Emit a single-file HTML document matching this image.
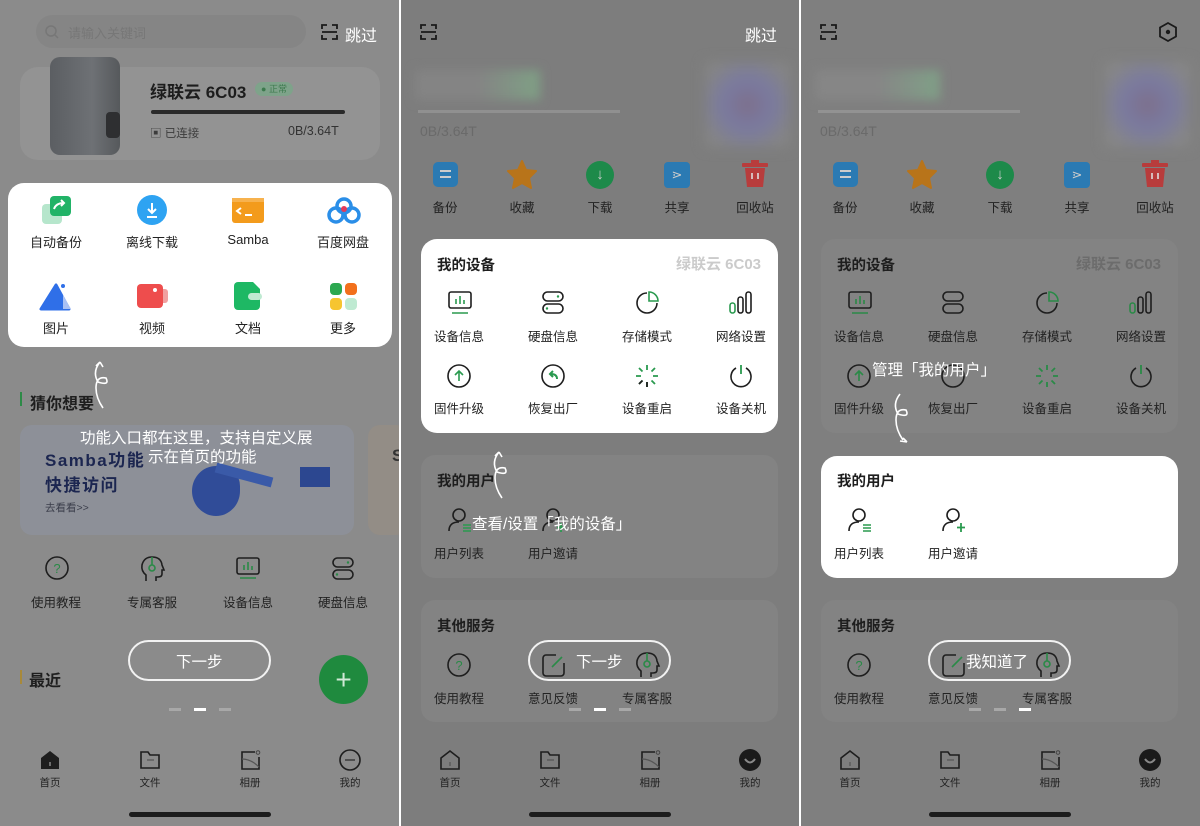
<!DOCTYPE html>
<html><head><meta charset="utf-8"><style>
*{margin:0;padding:0;box-sizing:border-box}
body{width:1200px;height:826px;overflow:hidden;background:#fff;font-family:"Liberation Sans","Noto Sans CJK SC",sans-serif;position:relative}
.p{position:absolute;top:0;height:826px;overflow:hidden}
.a{position:absolute}
.t{position:absolute;white-space:nowrap;transform:translateX(-50%);font-size:12.5px;color:#222}
.wc{position:absolute;background:#fff;border-radius:16px}
.dc{position:absolute;background:#838383;border-radius:14px}
.h{position:absolute;font-size:14.5px;font-weight:bold;color:#1e1e1e}
.w{position:absolute;color:#fff;font-size:15.5px;white-space:nowrap}
.btn{position:absolute;border:2px solid #f2f2f2;border-radius:21px;height:41px;width:143px}
.dot{position:absolute;width:12px;height:3px;background:#a8a8a8}
.hb{position:absolute;width:142px;height:5px;border-radius:3px;background:#1c1c1c}
svg{position:absolute;overflow:visible}
.tab{position:absolute;font-size:10.5px;color:#222;transform:translateX(-50%)}
</style></head><body>

<!-- PANEL 1 -->
<div class="p" style="left:0;width:399px;background:#8b8b8b">
 <div class="a" style="left:36px;top:15px;width:270px;height:33px;border-radius:17px;background:#858585"></div>
 <svg style="left:45px;top:25px" width="14" height="14"><circle cx="6" cy="6" r="5" fill="none" stroke="#777" stroke-width="1.5"/><line x1="10" y1="10" x2="13" y2="13" stroke="#777" stroke-width="1.5"/></svg>
 <div class="a" style="left:68px;top:23px;font-size:13px;color:#777">请输入关键词</div>
 <svg style="left:321px;top:24px" width="17" height="16"><path d="M1 5V1h5M11 1h5v4M1 11v4h5M11 15h5v-4M1 8h15" fill="none" stroke="#1a1a1a" stroke-width="1.8"/></svg>
 <div class="a" style="left:345px;top:22px;font-size:16px;color:#fff">跳过</div>
 <div class="a" style="left:20px;top:67px;width:360px;height:93px;border-radius:18px;background:#939393"></div>
 <div class="a" style="left:50px;top:57px;width:70px;height:98px;border-radius:10px;background:linear-gradient(90deg,#5b5e62,#6e7175 60%,#56595c)"></div>
 <div class="a" style="left:106px;top:112px;width:14px;height:26px;border-radius:4px;background:#2e2f31"></div>
 <div class="a" style="left:150px;top:78px;font-size:17px;font-weight:bold;color:#1d1d1d">绿联云 6C03</div>
 <div class="a" style="left:255px;top:82px;width:38px;height:14px;border-radius:7px;background:#7ea38a;font-size:9px;color:#3d7a4e;text-align:center;line-height:14px">● 正常</div>
 <div class="a" style="left:151px;top:110px;width:194px;height:4px;border-radius:2px;background:#2a2a2a"></div>
 <div class="a" style="left:150px;top:125px;font-size:11.5px;color:#3c3c3c">▣ 已连接</div>
 <div class="a" style="left:288px;top:124px;font-size:12.5px;color:#333">0B/3.64T</div>

 <div class="wc" style="left:8px;top:183px;width:384px;height:164px"></div>
 <svg style="left:41px;top:196px" width="32" height="30"><rect x="1" y="8" width="20" height="20" rx="4" fill="#b6e6cc"/><rect x="9" y="0" width="21" height="20" rx="4" fill="#21b367"/><path d="M13 13q2-6 10-6m-3-3l3 3-3 3" fill="none" stroke="#fff" stroke-width="2"/></svg>
 <svg style="left:137px;top:195px" width="30" height="30"><circle cx="15" cy="15" r="15" fill="#2ea3f2"/><path d="M15 8v10m-4-4l4 4 4-4M10 22h10" fill="none" stroke="#fff" stroke-width="2"/></svg>
 <svg style="left:232px;top:198px" width="32" height="25"><rect width="32" height="25" rx="3" fill="#f39b1c"/><rect width="32" height="4" fill="#f7b24e"/><path d="M9 10l-4 3 4 3M13 17h7" fill="none" stroke="#fff" stroke-width="2"/></svg>
 <svg style="left:327px;top:197px" width="34" height="28"><circle cx="9" cy="18" r="7" fill="none" stroke="#2a8ee8" stroke-width="3.5"/><circle cx="25" cy="18" r="7" fill="none" stroke="#2a8ee8" stroke-width="3.5"/><circle cx="17" cy="9" r="7" fill="none" stroke="#2a8ee8" stroke-width="3.5"/><circle cx="17" cy="12" r="3" fill="#e23a5a"/></svg>
 <svg style="left:39px;top:283px" width="34" height="28"><path d="M17 2L2 26h28z" fill="#2f6fe8" stroke="#2f6fe8" stroke-width="3" stroke-linejoin="round"/><circle cx="24" cy="3" r="2" fill="#2f6fe8"/><path d="M24 12l8 14h-8" fill="#a9c1f4"/></svg>
 <svg style="left:137px;top:284px" width="32" height="24"><rect x="22" y="5" width="9" height="14" rx="3" fill="#f1a0a0"/><rect x="0" y="0" width="26" height="24" rx="4" fill="#ee4d4d"/><circle cx="18" cy="6" r="2" fill="#fff"/></svg>
 <svg style="left:234px;top:282px" width="28" height="28"><path d="M4 0h15l7 7v17a4 4 0 01-4 4H4a4 4 0 01-4-4V4a4 4 0 014-4z" fill="#1eb864"/><rect x="14" y="11" width="14" height="7" rx="3.5" fill="#bfead2"/></svg>
 <svg style="left:330px;top:283px" width="27" height="27"><rect x="0" y="0" width="12" height="12" rx="4" fill="#2ca850"/><rect x="15" y="0" width="12" height="12" rx="4" fill="#f2701c"/><rect x="0" y="15" width="12" height="12" rx="4" fill="#f6c530"/><rect x="15" y="15" width="12" height="12" rx="4" fill="#bfead2"/></svg>
 <div class="t" style="left:56px;top:232px;font-size:13px">自动备份</div>
 <div class="t" style="left:152px;top:232px;font-size:13px">离线下载</div>
 <div class="t" style="left:248px;top:232px;font-size:13px">Samba</div>
 <div class="t" style="left:343px;top:232px;font-size:13px">百度网盘</div>
 <div class="t" style="left:56px;top:318px;font-size:13px">图片</div>
 <div class="t" style="left:152px;top:318px;font-size:13px">视频</div>
 <div class="t" style="left:248px;top:318px;font-size:13px">文档</div>
 <div class="t" style="left:343px;top:318px;font-size:13px">更多</div>

 <svg style="left:88px;top:360px" width="26" height="52"><path d="M12 2q-8 10-2 20q12 4 8-4q-10-2-10 10q0 10 7 20M12 2l-4 4M12 2l3 5" fill="none" stroke="#fff" stroke-width="1.6"/></svg>
 <div class="a" style="left:20px;top:392px;width:2px;height:14px;background:#2d8a47"></div>
 <div class="a" style="left:30px;top:390px;font-size:16px;font-weight:bold;color:#1e1e1e">猜你想要</div>
 <div class="a" style="left:20px;top:425px;width:334px;height:110px;border-radius:12px;background:#8d9098"></div>
 <div class="a" style="left:368px;top:425px;width:40px;height:110px;border-radius:12px;background:#938d86"></div>
 <div class="a" style="left:45px;top:446px;font-size:17px;font-weight:bold;color:#1c2650;letter-spacing:1.5px">Samba功能</div>
 <div class="a" style="left:45px;top:471px;font-size:17px;font-weight:bold;color:#1c2650;letter-spacing:1.5px">快捷访问</div>
 <div class="a" style="left:45px;top:500px;font-size:10.5px;color:#3a3d4a">去看看>></div>
 <div class="a" style="left:392px;top:446px;font-size:17px;font-weight:bold;color:#333">S</div>
 <div class="a" style="left:192px;top:466px;width:48px;height:50px;border-radius:50% 40% 50% 50%;background:#304c98"></div>
 <div class="a" style="left:215px;top:470px;width:58px;height:10px;background:#3a5aa8;transform:rotate(15deg)"></div>
 <div class="a" style="left:300px;top:467px;width:30px;height:20px;background:#2c4790"></div>
 <div class="w" style="left:80px;top:426px">功能入口都在这里，支持自定义展</div>
 <div class="w" style="left:148px;top:445px">示在首页的功能</div>

 <svg style="left:45px;top:556px" width="24" height="24"><circle cx="12" cy="12" r="11" fill="none" stroke="#1e1e1e" stroke-width="1.6"/><text x="12" y="17" text-anchor="middle" font-size="13" fill="#2a8a47" font-family="Liberation Sans">?</text></svg>
 <svg style="left:140px;top:556px" width="24" height="26"><path d="M6 25v-6q-5-4-4-10q2-8 10-8q9 0 10 8l2 5h-2v4q0 3-4 3h-2v4" fill="none" stroke="#1e1e1e" stroke-width="1.6"/><circle cx="12" cy="12" r="3" fill="none" stroke="#2a8a47" stroke-width="1.6"/><path d="M12 1v8" stroke="#2a8a47" stroke-width="1.6"/></svg>
 <svg style="left:236px;top:557px" width="24" height="22"><rect x="1" y="1" width="22" height="16" rx="2" fill="none" stroke="#1e1e1e" stroke-width="1.6"/><path d="M4 21h16M8 13V8M12 13V5M16 13V9" stroke="#2a8a47" stroke-width="1.6"/></svg>
 <svg style="left:332px;top:557px" width="22" height="24"><rect x="1" y="1" width="20" height="9" rx="4.5" fill="none" stroke="#1e1e1e" stroke-width="1.6"/><rect x="1" y="13" width="20" height="9" rx="4.5" fill="none" stroke="#1e1e1e" stroke-width="1.6"/><circle cx="16" cy="5.5" r="1.2" fill="#2a8a47"/><circle cx="5" cy="17.5" r="1.2" fill="#2a8a47"/></svg>
 <div class="t" style="left:56px;top:592px">使用教程</div>
 <div class="t" style="left:152px;top:592px">专属客服</div>
 <div class="t" style="left:248px;top:592px">设备信息</div>
 <div class="t" style="left:343px;top:592px">硬盘信息</div>

 <div class="a" style="left:20px;top:670px;width:2px;height:14px;background:#a8893a"></div>
 <div class="a" style="left:29px;top:667px;font-size:16px;font-weight:bold;color:#1e1e1e">最近</div>
 <div class="btn" style="left:128px;top:640px"></div>
 <div class="w" style="left:176px;top:650px">下一步</div>
 <div class="a" style="left:319px;top:655px;width:49px;height:49px;border-radius:50%;background:#1f8a3e"></div>
 <div class="a" style="left:319px;top:655px;width:49px;line-height:49px;text-align:center;color:#d0e9d6;font-size:28px">+</div>
 <div class="dot" style="left:169px;top:708px"></div><div class="dot" style="left:194px;top:708px;background:#fff"></div><div class="dot" style="left:219px;top:708px"></div>
</div>

<!-- PANEL 2 -->
<div class="p" style="left:401px;width:398px;background:#7d7d7d"></div>
<!-- PANEL 3 -->
<div class="p" style="left:801px;width:399px;background:#7f7f7f"></div>

<!-- shared top for panels 2 & 3 -->
<div class="p" style="left:400px;width:800px">
 <svg style="left:20px;top:24px" width="17" height="16"><path d="M1 5V1h5M11 1h5v4M1 11v4h5M11 15h5v-4M1 8h15" fill="none" stroke="#1a1a1a" stroke-width="1.8"/></svg>
 <div class="a" style="left:345px;top:22px;font-size:16px;color:#fff">跳过</div>
 <svg style="left:420px;top:24px" width="17" height="16"><path d="M1 5V1h5M11 1h5v4M1 11v4h5M11 15h5v-4M1 8h15" fill="none" stroke="#1a1a1a" stroke-width="1.8"/></svg>
 <svg style="left:759px;top:22px" width="18" height="20"><path d="M9 1l8 4.5v9L9 19l-8-4.5v-9z" fill="none" stroke="#1a1a1a" stroke-width="1.8"/><circle cx="9" cy="10" r="2.2" fill="#1a1a1a"/></svg>
</div>

<div class="p" style="left:400px;width:400px">
 <div class="a" style="left:15px;top:70px;width:125px;height:30px;background:linear-gradient(90deg,#848484 50%,#7fa085);filter:blur(5px)"></div>
 <div class="a" style="left:18px;top:110px;width:202px;height:3px;background:#909090"></div>
 <div class="a" style="left:20px;top:123px;font-size:14px;color:#6a6a6a">0B/3.64T</div>
 <div class="a" style="left:305px;top:62px;width:85px;height:85px;background:radial-gradient(#7d6f8a,#7a7aa0 40%,#858585 80%);filter:blur(6px)"></div>
</div>
<div class="p" style="left:800px;width:400px">
 <div class="a" style="left:15px;top:70px;width:125px;height:30px;background:linear-gradient(90deg,#868686 50%,#80a087);filter:blur(5px)"></div>
 <div class="a" style="left:18px;top:110px;width:202px;height:3px;background:#929292"></div>
 <div class="a" style="left:20px;top:123px;font-size:14px;color:#6a6a6a">0B/3.64T</div>
 <div class="a" style="left:305px;top:62px;width:85px;height:85px;background:radial-gradient(#7d6f8a,#7a7aa0 40%,#878787 80%);filter:blur(6px)"></div>
</div>

<!-- icon rows (panels 2/3) generated twice -->
<div class="p" style="left:400px;width:400px" id="r2">
 <div class="a" style="left:33px;top:162px;width:25px;height:25px;border-radius:5px;background:#2b7ab3"></div><div class="a" style="left:40px;top:170px;width:11px;height:2px;background:#ccc;box-shadow:0 6px 0 #ccc"></div>
 <div class="a" style="left:507px;top:160px" ></div>
 <svg style="left:107px;top:160px" width="30" height="28"><path d="M15 1l4 9 10 1-7 7 2 10-9-5-9 5 2-10-7-7 10-1z" fill="#b8741a" stroke="#b8741a" stroke-linejoin="round" stroke-width="2"/></svg>
 <div class="a" style="left:186px;top:161px;width:28px;height:28px;border-radius:50%;background:#1d8a4a"></div><div class="a" style="left:186px;top:161px;width:28px;text-align:center;line-height:28px;color:#ccc;font-size:15px">↓</div>
 <div class="a" style="left:264px;top:162px;width:26px;height:26px;border-radius:4px;background:#2b7ab3;color:#ccc;font-size:13px;text-align:center;line-height:26px">⋗</div>
 <svg style="left:342px;top:160px" width="26" height="28"><rect x="0" y="3" width="26" height="4" rx="1" fill="#b83c3c"/><rect x="9" y="0" width="8" height="4" fill="#b83c3c"/><path d="M3 8h20l-2 19H5z" fill="#b83c3c"/><path d="M10 13v6M16 13v6" stroke="#ddd" stroke-width="1.6"/></svg>
 <div class="t" style="left:45px;top:197px">备份</div><div class="t" style="left:122px;top:197px">收藏</div><div class="t" style="left:200px;top:197px">下载</div><div class="t" style="left:277px;top:197px">共享</div><div class="t" style="left:355px;top:197px">回收站</div>
</div>
<div class="p" style="left:800px;width:400px">
 <div class="a" style="left:33px;top:162px;width:25px;height:25px;border-radius:5px;background:#2b7ab3"></div><div class="a" style="left:40px;top:170px;width:11px;height:2px;background:#ccc;box-shadow:0 6px 0 #ccc"></div>
 <svg style="left:107px;top:160px" width="30" height="28"><path d="M15 1l4 9 10 1-7 7 2 10-9-5-9 5 2-10-7-7 10-1z" fill="#b8741a" stroke="#b8741a" stroke-linejoin="round" stroke-width="2"/></svg>
 <div class="a" style="left:186px;top:161px;width:28px;height:28px;border-radius:50%;background:#1d8a4a"></div><div class="a" style="left:186px;top:161px;width:28px;text-align:center;line-height:28px;color:#ccc;font-size:15px">↓</div>
 <div class="a" style="left:264px;top:162px;width:26px;height:26px;border-radius:4px;background:#2b7ab3;color:#ccc;font-size:13px;text-align:center;line-height:26px">⋗</div>
 <svg style="left:342px;top:160px" width="26" height="28"><rect x="0" y="3" width="26" height="4" rx="1" fill="#b83c3c"/><rect x="9" y="0" width="8" height="4" fill="#b83c3c"/><path d="M3 8h20l-2 19H5z" fill="#b83c3c"/><path d="M10 13v6M16 13v6" stroke="#ddd" stroke-width="1.6"/></svg>
 <div class="t" style="left:45px;top:197px">备份</div><div class="t" style="left:122px;top:197px">收藏</div><div class="t" style="left:200px;top:197px">下载</div><div class="t" style="left:277px;top:197px">共享</div><div class="t" style="left:355px;top:197px">回收站</div>
</div>

<!-- Panel 2 cards -->
<div class="p" style="left:400px;width:400px">
 <div class="wc" style="left:21px;top:239px;width:357px;height:194px"></div>
 <div class="dc" style="left:21px;top:455px;width:357px;height:123px"></div>
 <div class="dc" style="left:21px;top:600px;width:357px;height:122px"></div>
 <div class="h" style="left:37px;top:254px">我的设备</div>
 <div class="a" style="left:276px;top:253px;font-size:15px;font-weight:bold;color:#cbcbcb">绿联云 6C03</div>
 <div class="h" style="left:37px;top:470px">我的用户</div>
 <div class="h" style="left:37px;top:615px">其他服务</div>
</div>
<!-- Panel 3 cards -->
<div class="p" style="left:800px;width:400px">
 <div class="dc" style="left:21px;top:239px;width:357px;height:194px"></div>
 <div class="wc" style="left:21px;top:456px;width:357px;height:122px"></div>
 <div class="dc" style="left:21px;top:600px;width:357px;height:122px"></div>
 <div class="h" style="left:37px;top:254px">我的设备</div>
 <div class="a" style="left:276px;top:253px;font-size:15px;font-weight:bold;color:#6c6c6c">绿联云 6C03</div>
 <div class="h" style="left:37px;top:470px">我的用户</div>
 <div class="h" style="left:37px;top:615px">其他服务</div>
</div>

<!-- device icons, users, services for both panels -->
<div class="p" style="left:400px;width:400px">
 <svg style="left:48px;top:291px" width="24" height="24"><rect x="1" y="1" width="22" height="16" rx="2" fill="none" stroke="#1e1e1e" stroke-width="1.6"/><path d="M4 22h16M8 13V8M12 13V5M16 13V9" stroke="#2a9a4f" stroke-width="1.6"/></svg>
 <svg style="left:142px;top:291px" width="22" height="24"><rect x="1" y="1" width="20" height="9" rx="4.5" fill="none" stroke="#1e1e1e" stroke-width="1.6"/><rect x="1" y="13" width="20" height="9" rx="4.5" fill="none" stroke="#1e1e1e" stroke-width="1.6"/><circle cx="16" cy="5.5" r="1.2" fill="#2a9a4f"/><circle cx="5" cy="17.5" r="1.2" fill="#2a9a4f"/></svg>
 <svg style="left:235px;top:291px" width="24" height="24"><path d="M12 2a10 10 0 1 0 10 10" fill="none" stroke="#1e1e1e" stroke-width="1.6"/><path d="M14 1v9h9a9 9 0 0 0-9-9z" fill="none" stroke="#2a9a4f" stroke-width="1.6"/></svg>
 <svg style="left:329px;top:291px" width="24" height="24"><rect x="1" y="12" width="5" height="10" rx="2.5" fill="none" stroke="#2a9a4f" stroke-width="1.6"/><rect x="9" y="6" width="5" height="16" rx="2.5" fill="none" stroke="#1e1e1e" stroke-width="1.6"/><rect x="17" y="1" width="5" height="21" rx="2.5" fill="none" stroke="#1e1e1e" stroke-width="1.6"/></svg>
 <svg style="left:47px;top:364px" width="24" height="24"><circle cx="12" cy="12" r="11" fill="none" stroke="#1e1e1e" stroke-width="1.6"/><path d="M12 17V7M8 11l4-4 4 4" fill="none" stroke="#2a9a4f" stroke-width="1.6"/></svg>
 <svg style="left:141px;top:364px" width="24" height="24"><circle cx="12" cy="12" r="11" fill="none" stroke="#1e1e1e" stroke-width="1.6"/><path d="M16 15q0-5-6-5M12 7l-3 3 3 3" fill="none" stroke="#2a9a4f" stroke-width="2"/></svg>
 <svg style="left:235px;top:364px" width="24" height="24"><path d="M12 1v5M12 18v5M1 12h5M18 12h5M4 4l3.5 3.5M16.5 16.5L20 20M20 4l-3.5 3.5M4 20l3.5-3.5" stroke="#2a9a4f" stroke-width="1.8"/><path d="M12 18v5M4 20l3.5-3.5" stroke="#1e1e1e" stroke-width="1.8"/></svg>
 <svg style="left:329px;top:364px" width="24" height="24"><path d="M7 4a10 10 0 1 0 10 0" fill="none" stroke="#1e1e1e" stroke-width="1.6"/><path d="M12 1v9" stroke="#2a9a4f" stroke-width="1.8"/></svg>
 <div class="t" style="left:59px;top:326px">设备信息</div><div class="t" style="left:153px;top:326px">硬盘信息</div><div class="t" style="left:247px;top:326px">存储模式</div><div class="t" style="left:341px;top:326px">网络设置</div>
 <div class="t" style="left:59px;top:398px">固件升级</div><div class="t" style="left:153px;top:398px">恢复出厂</div><div class="t" style="left:247px;top:398px">设备重启</div><div class="t" style="left:341px;top:398px">设备关机</div>
 <svg style="left:48px;top:508px" width="24" height="24"><circle cx="11" cy="7" r="6" fill="none" stroke="#1e1e1e" stroke-width="1.6"/><path d="M1 23q0-9 10-9" fill="none" stroke="#1e1e1e" stroke-width="1.6"/><path d="M15 17h8M15 20h8M15 23h8" stroke="#2a9a4f" stroke-width="1.6"/></svg>
 <svg style="left:142px;top:508px" width="24" height="24"><circle cx="11" cy="7" r="6" fill="none" stroke="#1e1e1e" stroke-width="1.6"/><path d="M1 23q0-9 10-9" fill="none" stroke="#1e1e1e" stroke-width="1.6"/><path d="M19 15v9M15 19.5h8" stroke="#2a9a4f" stroke-width="1.8"/></svg>
 <div class="t" style="left:59px;top:543px">用户列表</div><div class="t" style="left:153px;top:543px">用户邀请</div>
 <svg style="left:47px;top:653px" width="24" height="24"><circle cx="12" cy="12" r="11" fill="none" stroke="#1e1e1e" stroke-width="1.6"/><text x="12" y="17" text-anchor="middle" font-size="13" fill="#2a8a47" font-family="Liberation Sans">?</text></svg>
 <svg style="left:142px;top:653px" width="24" height="24"><path d="M14 2H4a3 3 0 0 0-3 3v15a3 3 0 0 0 3 3h15a3 3 0 0 0 3-3V10" fill="none" stroke="#1e1e1e" stroke-width="1.6"/><path d="M10 14L20 4" stroke="#2a8a47" stroke-width="1.6"/></svg>
 <svg style="left:235px;top:652px" width="24" height="26"><path d="M6 25v-6q-5-4-4-10q2-8 10-8q9 0 10 8l2 5h-2v4q0 3-4 3h-2v4" fill="none" stroke="#1e1e1e" stroke-width="1.6"/><circle cx="12" cy="12" r="3" fill="none" stroke="#2a8a47" stroke-width="1.6"/><path d="M12 1v8" stroke="#2a8a47" stroke-width="1.6"/></svg>
 <div class="t" style="left:59px;top:688px">使用教程</div><div class="t" style="left:153px;top:688px">意见反馈</div><div class="t" style="left:247px;top:688px">专属客服</div>
</div>
<div class="p" style="left:800px;width:400px">
 <svg style="left:48px;top:291px" width="24" height="24"><rect x="1" y="1" width="22" height="16" rx="2" fill="none" stroke="#1e1e1e" stroke-width="1.6"/><path d="M4 22h16M8 13V8M12 13V5M16 13V9" stroke="#2a8a47" stroke-width="1.6"/></svg>
 <svg style="left:142px;top:291px" width="22" height="24"><rect x="1" y="1" width="20" height="9" rx="4.5" fill="none" stroke="#1e1e1e" stroke-width="1.6"/><rect x="1" y="13" width="20" height="9" rx="4.5" fill="none" stroke="#1e1e1e" stroke-width="1.6"/></svg>
 <svg style="left:235px;top:291px" width="24" height="24"><path d="M12 2a10 10 0 1 0 10 10" fill="none" stroke="#1e1e1e" stroke-width="1.6"/><path d="M14 1v9h9a9 9 0 0 0-9-9z" fill="none" stroke="#2a8a47" stroke-width="1.6"/></svg>
 <svg style="left:329px;top:291px" width="24" height="24"><rect x="1" y="12" width="5" height="10" rx="2.5" fill="none" stroke="#2a8a47" stroke-width="1.6"/><rect x="9" y="6" width="5" height="16" rx="2.5" fill="none" stroke="#1e1e1e" stroke-width="1.6"/><rect x="17" y="1" width="5" height="21" rx="2.5" fill="none" stroke="#1e1e1e" stroke-width="1.6"/></svg>
 <svg style="left:47px;top:364px" width="24" height="24"><circle cx="12" cy="12" r="11" fill="none" stroke="#1e1e1e" stroke-width="1.6"/><path d="M12 17V7M8 11l4-4 4 4" fill="none" stroke="#2a8a47" stroke-width="1.6"/></svg>
 <svg style="left:141px;top:364px" width="24" height="24"><circle cx="12" cy="12" r="11" fill="none" stroke="#1e1e1e" stroke-width="1.6"/></svg>
 <svg style="left:235px;top:364px" width="24" height="24"><path d="M12 1v5M12 18v5M1 12h5M18 12h5M4 4l3.5 3.5M16.5 16.5L20 20M20 4l-3.5 3.5M4 20l3.5-3.5" stroke="#2a8a47" stroke-width="1.8"/></svg>
 <svg style="left:329px;top:364px" width="24" height="24"><path d="M7 4a10 10 0 1 0 10 0" fill="none" stroke="#1e1e1e" stroke-width="1.6"/><path d="M12 1v9" stroke="#2a8a47" stroke-width="1.8"/></svg>
 <div class="t" style="left:59px;top:326px">设备信息</div><div class="t" style="left:153px;top:326px">硬盘信息</div><div class="t" style="left:247px;top:326px">存储模式</div><div class="t" style="left:341px;top:326px">网络设置</div>
 <div class="t" style="left:59px;top:398px">固件升级</div><div class="t" style="left:153px;top:398px">恢复出厂</div><div class="t" style="left:247px;top:398px">设备重启</div><div class="t" style="left:341px;top:398px">设备关机</div>
 <svg style="left:48px;top:508px" width="24" height="24"><circle cx="11" cy="7" r="6" fill="none" stroke="#1e1e1e" stroke-width="1.6"/><path d="M1 23q0-9 10-9" fill="none" stroke="#1e1e1e" stroke-width="1.6"/><path d="M15 17h8M15 20h8M15 23h8" stroke="#2a9a4f" stroke-width="1.6"/></svg>
 <svg style="left:142px;top:508px" width="24" height="24"><circle cx="11" cy="7" r="6" fill="none" stroke="#1e1e1e" stroke-width="1.6"/><path d="M1 23q0-9 10-9" fill="none" stroke="#1e1e1e" stroke-width="1.6"/><path d="M19 15v9M15 19.5h8" stroke="#2a9a4f" stroke-width="1.8"/></svg>
 <div class="t" style="left:59px;top:543px">用户列表</div><div class="t" style="left:153px;top:543px">用户邀请</div>
 <svg style="left:47px;top:653px" width="24" height="24"><circle cx="12" cy="12" r="11" fill="none" stroke="#1e1e1e" stroke-width="1.6"/><text x="12" y="17" text-anchor="middle" font-size="13" fill="#2a8a47" font-family="Liberation Sans">?</text></svg>
 <svg style="left:142px;top:653px" width="24" height="24"><path d="M14 2H4a3 3 0 0 0-3 3v15a3 3 0 0 0 3 3h15a3 3 0 0 0 3-3V10" fill="none" stroke="#1e1e1e" stroke-width="1.6"/><path d="M10 14L20 4" stroke="#2a8a47" stroke-width="1.6"/></svg>
 <svg style="left:235px;top:652px" width="24" height="26"><path d="M6 25v-6q-5-4-4-10q2-8 10-8q9 0 10 8l2 5h-2v4q0 3-4 3h-2v4" fill="none" stroke="#1e1e1e" stroke-width="1.6"/><circle cx="12" cy="12" r="3" fill="none" stroke="#2a8a47" stroke-width="1.6"/><path d="M12 1v8" stroke="#2a8a47" stroke-width="1.6"/></svg>
 <div class="t" style="left:59px;top:688px">使用教程</div><div class="t" style="left:153px;top:688px">意见反馈</div><div class="t" style="left:247px;top:688px">专属客服</div>
</div>

<!-- overlays panel 2 -->
<svg style="left:487px;top:450px" width="26" height="52"><path d="M12 2q-8 10-2 20q12 4 8-4q-10-2-10 10q0 10 7 20M12 2l-4 4M12 2l3 5" fill="none" stroke="#fff" stroke-width="1.6"/></svg>
<div class="w" style="left:472px;top:512px">查看/设置「我的设备」</div>
<div class="btn" style="left:528px;top:640px"></div>
<div class="w" style="left:576px;top:650px">下一步</div>
<div class="dot" style="left:569px;top:708px"></div><div class="dot" style="left:594px;top:708px;background:#fff"></div><div class="dot" style="left:619px;top:708px"></div>
<!-- overlays panel 3 -->
<div class="w" style="left:872px;top:358px">管理「我的用户」</div>
<svg style="left:888px;top:392px" width="26" height="52"><path d="M12 2q-8 10-2 20q12 4 8-4q-10-2-10 10q0 10 7 20M19 50l-4-4M19 50l-7-1" fill="none" stroke="#fff" stroke-width="1.6"/></svg>
<div class="btn" style="left:928px;top:640px"></div>
<div class="w" style="left:966px;top:650px">我知道了</div>
<div class="dot" style="left:969px;top:708px"></div><div class="dot" style="left:994px;top:708px"></div><div class="dot" style="left:1019px;top:708px;background:#fff"></div>

<!-- tab bars -->
<div class="p" style="left:0;width:1200px">
 <svg style="left:40px;top:750px" width="20" height="20"><path d="M1 8L10 1l9 7v11H1z" fill="#1e1e1e"/><path d="M10 12v4" stroke="#888" stroke-width="1.5"/></svg>
 <svg style="left:440px;top:750px" width="20" height="20"><path d="M1 8L10 1l9 7v11H1z" fill="none" stroke="#1e1e1e" stroke-width="1.6"/><path d="M10 12v4" stroke="#555" stroke-width="1.2"/></svg>
 <svg style="left:840px;top:750px" width="20" height="20"><path d="M1 8L10 1l9 7v11H1z" fill="none" stroke="#1e1e1e" stroke-width="1.6"/><path d="M10 12v4" stroke="#555" stroke-width="1.2"/></svg>
 <svg style="left:140px;top:751px" width="20" height="18"><path d="M1 1h7l2 3h9v13H1z" fill="none" stroke="#1e1e1e" stroke-width="1.6"/><path d="M7 9h7" stroke="#555" stroke-width="1.2"/></svg>
 <svg style="left:540px;top:751px" width="20" height="18"><path d="M1 1h7l2 3h9v13H1z" fill="none" stroke="#1e1e1e" stroke-width="1.6"/><path d="M7 9h7" stroke="#555" stroke-width="1.2"/></svg>
 <svg style="left:940px;top:751px" width="20" height="18"><path d="M1 1h7l2 3h9v13H1z" fill="none" stroke="#1e1e1e" stroke-width="1.6"/><path d="M7 9h7" stroke="#555" stroke-width="1.2"/></svg>
 <svg style="left:241px;top:750px" width="20" height="20"><path d="M14 2H1v17h17V7" fill="none" stroke="#1e1e1e" stroke-width="1.6"/><circle cx="17" cy="2.5" r="1.8" fill="none" stroke="#444" stroke-width="1"/><path d="M1 9q9 0 17 8" fill="none" stroke="#555" stroke-width="1.2"/></svg>
 <svg style="left:641px;top:750px" width="20" height="20"><path d="M14 2H1v17h17V7" fill="none" stroke="#1e1e1e" stroke-width="1.6"/><circle cx="17" cy="2.5" r="1.8" fill="none" stroke="#444" stroke-width="1"/><path d="M1 9q9 0 17 8" fill="none" stroke="#555" stroke-width="1.2"/></svg>
 <svg style="left:1041px;top:750px" width="20" height="20"><path d="M14 2H1v17h17V7" fill="none" stroke="#1e1e1e" stroke-width="1.6"/><circle cx="17" cy="2.5" r="1.8" fill="none" stroke="#444" stroke-width="1"/><path d="M1 9q9 0 17 8" fill="none" stroke="#555" stroke-width="1.2"/></svg>
 <svg style="left:339px;top:749px" width="22" height="22"><circle cx="11" cy="11" r="10" fill="none" stroke="#1e1e1e" stroke-width="1.6"/><path d="M6 11h10" stroke="#333" stroke-width="1.4"/></svg>
 <svg style="left:739px;top:749px" width="22" height="22"><circle cx="11" cy="11" r="11" fill="#1a1a1a"/><path d="M6 10q5 7 10 0" fill="none" stroke="#888" stroke-width="2"/></svg>
 <svg style="left:1139px;top:749px" width="22" height="22"><circle cx="11" cy="11" r="11" fill="#1a1a1a"/><path d="M6 10q5 7 10 0" fill="none" stroke="#888" stroke-width="2"/></svg>
 <div class="tab" style="left:50px;top:775px">首页</div><div class="tab" style="left:150px;top:775px">文件</div><div class="tab" style="left:250px;top:775px">相册</div><div class="tab" style="left:350px;top:775px">我的</div>
 <div class="tab" style="left:450px;top:775px">首页</div><div class="tab" style="left:550px;top:775px">文件</div><div class="tab" style="left:650px;top:775px">相册</div><div class="tab" style="left:750px;top:775px">我的</div>
 <div class="tab" style="left:850px;top:775px">首页</div><div class="tab" style="left:950px;top:775px">文件</div><div class="tab" style="left:1050px;top:775px">相册</div><div class="tab" style="left:1150px;top:775px">我的</div>
 <div class="hb" style="left:129px;top:812px"></div><div class="hb" style="left:529px;top:812px"></div><div class="hb" style="left:929px;top:812px"></div>
</div>
</body></html>
